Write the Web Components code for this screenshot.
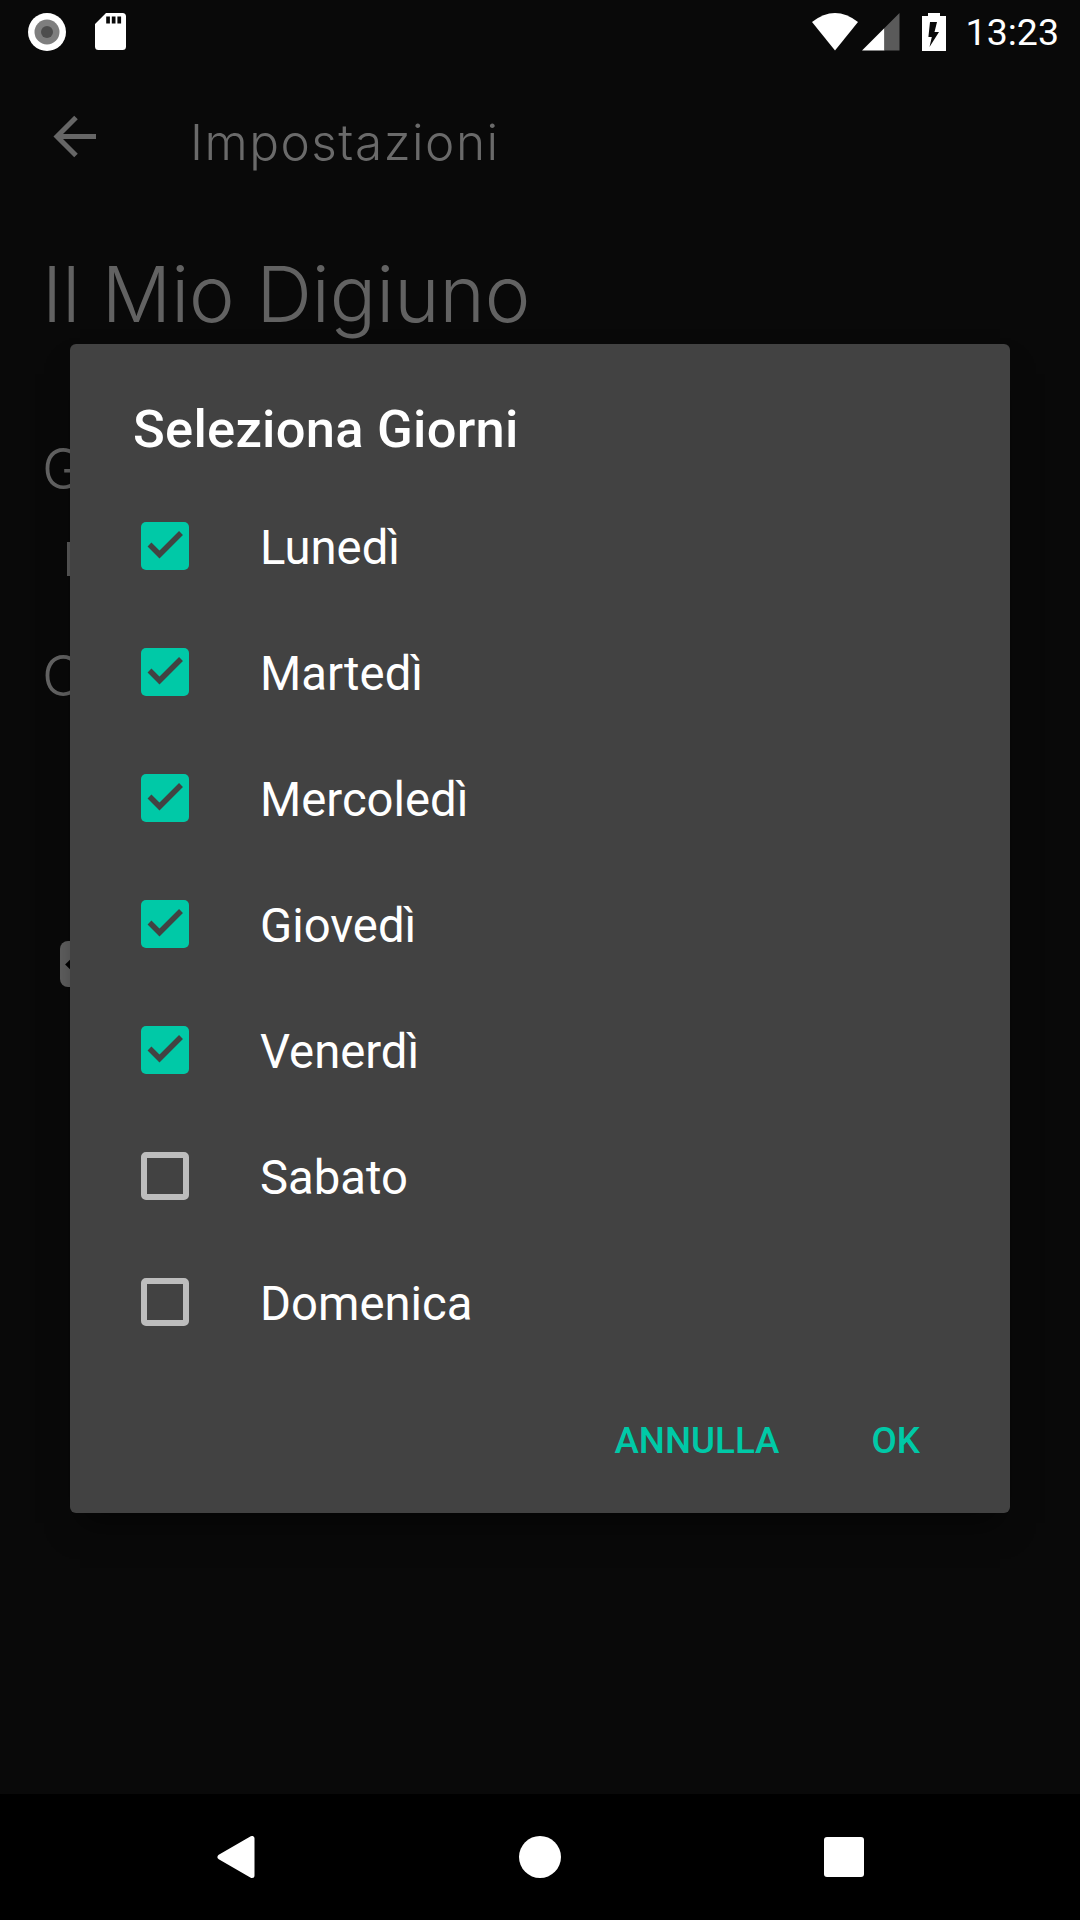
<!DOCTYPE html>
<html lang="it">
<head>
<meta charset="utf-8">
<title>Impostazioni</title>
<style>
html,body{margin:0;padding:0;background:#090909;}
</style>
</head>
<body>
<app-screen>
  <status-bar slot="top" time="13:23"></status-bar>
  <app-bar slot="top">Impostazioni</app-bar>
  <page-title slot="top">Il Mio Digiuno</page-title>
  <behind-settings slot="top"></behind-settings>
  <nav-bar slot="bottom"></nav-bar>
  <day-dialog slot="overlay" heading="Seleziona Giorni">
    <day-row checked>Lunedì</day-row>
    <day-row checked>Martedì</day-row>
    <day-row checked>Mercoledì</day-row>
    <day-row checked>Giovedì</day-row>
    <day-row checked>Venerdì</day-row>
    <day-row>Sabato</day-row>
    <day-row>Domenica</day-row>
    <dialog-action slot="actions">ANNULLA</dialog-action>
    <dialog-action slot="actions">OK</dialog-action>
  </day-dialog>
</app-screen>
<script>
function def(name, html, init){
  customElements.define(name, class extends HTMLElement{
    constructor(){super();const r=this.attachShadow({mode:'open'});r.innerHTML=html;}
    connectedCallback(){ if(init) init(this,this.shadowRoot); }
  });
}
def('app-screen',`<style>
:host{display:block;position:relative;width:1080px;height:1920px;overflow:hidden;background:#090909;}
.col{display:flex;flex-direction:column;height:100%;}
.main{flex:1;}
.scrim{position:absolute;left:0;right:0;top:63px;bottom:126px;display:flex;align-items:center;justify-content:center;}
</style>
<div class="col"><div class="main"><slot name="top"></slot></div><slot name="bottom"></slot></div>
<div class="scrim"><slot name="overlay"></slot></div>`);

def('status-bar',`<style>
:host{display:flex;align-items:center;height:63px;padding:0 21px 0 28px;font:400 37.5px Roboto,sans-serif;color:#fff;box-sizing:border-box;}
svg{display:block;flex:none;}
.sd{margin-left:29px;}
.wifi{margin-left:auto;}
.sig{margin-left:3px;}
.bat{margin-left:22px;}
.time{margin-left:19.5px;line-height:63px;padding-top:1px;}
</style>
<svg width="38" height="38" viewBox="0 0 38 38"><circle cx="19" cy="19" r="19" fill="#fff"/><circle cx="19" cy="19" r="12.5" fill="#7e7e7e"/><circle cx="19" cy="19" r="6" fill="#4d4d4d"/></svg>
<svg class="sd" width="31" height="37" viewBox="0 0 31 37"><path fill="#fff" d="M11 0H27.5A3.5 3.5 0 0 1 31 3.5V33.5A3.5 3.5 0 0 1 27.5 37H3.5A3.5 3.5 0 0 1 0 33.5V11Z"/><path fill="#090909" d="M11.2 3.5h3.7v7h-3.7zM16.8 3.5h3.7v7h-3.7zM22.4 3.5h3.7v7h-3.7z"/></svg>
<svg class="wifi" width="48" height="38" viewBox="0 0 48 38"><path fill="#fff" d="M24 37.5 1 9Q24-9 47 9Z"/></svg>
<svg class="sig" width="38" height="38" viewBox="0 0 38 38"><path fill="#fff" d="M0 37.5 22.5 15V37.5Z"/><path fill="#5a5a5a" d="M22.5 15 37.5 0V37.5H22.5Z"/></svg>
<svg class="bat" width="24" height="38" viewBox="0 0 24 38"><path fill="#fff" d="M6 0H18V3H24V38H0V3H6Z"/><path fill="#090909" d="M8 9H15L12.5 19H17L7.5 34 9.8 24H6.4Z"/></svg>
<span class="time"></span>`,(h,r)=>{r.querySelector('.time').textContent=h.getAttribute('time');});

def('app-bar',`<style>
:host{display:flex;align-items:center;height:147px;padding-left:52px;box-sizing:border-box;color:#6a6a6a;}
svg{display:block;flex:none;}
.t{margin-left:93px;font:300 49.5px Inter,sans-serif;letter-spacing:1.5px;padding-top:11px;white-space:nowrap;}
</style>
<svg width="45" height="45" viewBox="0 0 45 45" fill="none" stroke="#666" stroke-width="5"><path d="M44 22.5H6M24 3.5 5 22.5 24 41.5"/></svg>
<div class="t"><slot></slot></div>`);

def('page-title',`<style>
:host{display:block;padding:38.5px 0 0 42px;height:117px;box-sizing:border-box;font:300 77px/90px Inter,sans-serif;color:#626262;white-space:nowrap;}
</style><slot></slot>`);

def('behind-settings',`<style>
:host{display:block;position:relative;padding-left:42px;color:#626262;font:300 56px/70px Inter,sans-serif;}
.g{height:70px;margin-top:107px;}
.bar{width:3px;height:34px;background:#5a5a5a;margin:38px 0 0 25px;}
.o{height:70px;margin-top:65px;}
.btn{width:80px;height:46px;margin:230px 0 0 18px;border-radius:8px;background:#606060;display:flex;align-items:center;padding-left:3px;box-sizing:border-box;}
.btn i{display:block;margin-left:4px;width:9px;height:9px;background:#000;transform:rotate(45deg);}
</style>
<div class="g">G</div>
<div class="bar"></div>
<div class="o">O</div>
<div class="btn"><i></i></div>`);

def('nav-bar',`<style>
:host{display:flex;align-items:center;justify-content:space-between;height:126px;padding:0 216px 0 217px;box-sizing:border-box;background:#000;flex:none;}
svg{display:block;}
</style>
<svg width="38" height="42" viewBox="0 0 38 42"><path fill="#fff" stroke="#fff" stroke-width="5" stroke-linejoin="round" d="M3 21 35 2.5V39.5Z"/></svg>
<svg width="42" height="42" viewBox="0 0 42 42"><circle cx="21" cy="21" r="21" fill="#fff"/></svg>
<svg width="40" height="40" viewBox="0 0 40 40"><rect width="40" height="40" rx="3" fill="#fff"/></svg>`);

def('day-dialog',`<style>
:host{display:block;width:940px;height:1169px;background:#424242;border-radius:6px;box-sizing:border-box;box-shadow:0 20px 30px -10px rgba(0,0,0,.5);position:relative;color:#fff;}
.h{font:500 52.5px/62px Roboto,sans-serif;letter-spacing:.25px;padding:54px 0 0 63px;height:138.5px;box-sizing:border-box;white-space:nowrap;}
.acts{display:flex;justify-content:flex-end;align-items:center;gap:92px;height:149px;padding:0 90px 0 0;box-sizing:border-box;margin-top:1px;}
</style>
<div class="h"></div>
<slot></slot>
<div class="acts"><slot name="actions"></slot></div>`,(h,r)=>{r.querySelector('.h').textContent=h.getAttribute('heading');});

def('day-row',`<style>
:host{display:flex;align-items:center;height:126px;padding-left:71px;box-sizing:border-box;font:400 47.25px Roboto,sans-serif;color:#fff;}
.box{width:48px;height:48px;flex:none;box-sizing:border-box;border-radius:5px;display:block;}
.on{background:#00c9a7;}
.off{border:6px solid #bdbdbd;}
svg{display:block;}
.lab{margin-left:71px;padding-top:5px;white-space:nowrap;}
</style>
<span class="box"></span><span class="lab"><slot></slot></span>`,(h,r)=>{
  const b=r.querySelector('.box');
  if(h.hasAttribute('checked')){b.classList.add('on');b.innerHTML='<svg width="48" height="48" viewBox="0 0 48 48" fill="none" stroke="#424242" stroke-width="5.5"><path d="M8.5 22.5 18.5 32.5 40 11"/></svg>';}
  else b.classList.add('off');
});

def('dialog-action',`<style>
:host{display:block;font:500 36.75px Roboto,sans-serif;color:#00c9a7;white-space:nowrap;}
</style><slot></slot>`);
</script>
</body>
</html>
